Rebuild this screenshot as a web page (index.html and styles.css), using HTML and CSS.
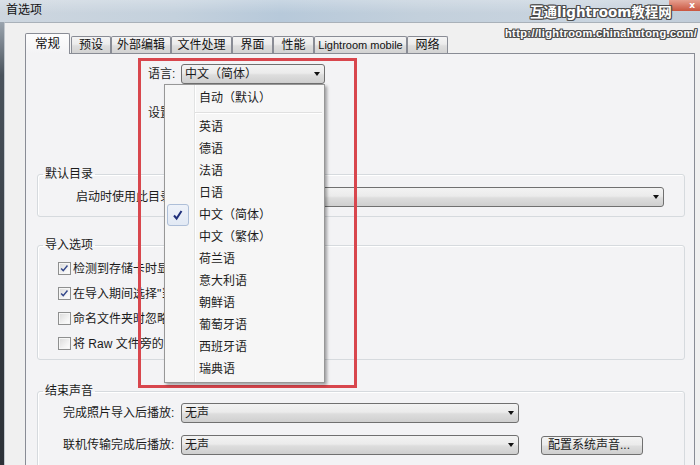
FILE: index.html
```html
<!DOCTYPE html>
<html lang="zh-CN">
<head>
<meta charset="utf-8">
<title>首选项</title>
<link rel="stylesheet" href="styles.css">
</head>
<body>
<div class="win">
  <div class="titlebar">
    <span class="title">首选项</span>
    <div class="close">x</div>
  </div>
  <div class="frame">
    <div class="edge"></div>
    <div class="client">
      <div class="tabs">
        <div class="tab sel w45">常规</div>
        <div class="tab w40 gap">预设</div>
        <div class="tab w60">外部编辑</div>
        <div class="tab w61">文件处理</div>
        <div class="tab w41">界面</div>
        <div class="tab w41">性能</div>
        <div class="tab w93 latin">Lightroom mobile</div>
        <div class="tab w41">网络</div>
      </div>
      <div class="panel">
        <div class="lang">
          <span class="lbl">语言:</span>
          <div class="combo w-lang"><span>中文（简体）</span><span class="arrow"></span></div>
        </div>
        <div class="settings">
          <span class="lbl">设置:</span>
        </div>

        <fieldset class="group g1">
          <legend>默认目录</legend>
          <div class="inner row-dir">
            <span class="lbl-dir">启动时使用此目录:</span>
            <div class="combo w-dir"><span></span><span class="arrow"></span></div>
          </div>
        </fieldset>

        <fieldset class="group g2">
          <legend>导入选项</legend>
          <div class="inner">
            <div class="crow"><span class="cb on"><svg viewBox="0 0 13 13" width="11" height="11"><path d="M2.5 6.5 L5 9 L10 3" fill="none" stroke="#34488a" stroke-width="1.7"/></svg></span><span>检测到存储卡时显示导入对话框</span></div>
            <div class="crow"><span class="cb on"><svg viewBox="0 0 13 13" width="11" height="11"><path d="M2.5 6.5 L5 9 L10 3" fill="none" stroke="#34488a" stroke-width="1.7"/></svg></span><span>在导入期间选择"当前/上一次导入"文件夹</span></div>
            <div class="crow"><span class="cb"></span><span>命名文件夹时忽略相机生成的文件夹名</span></div>
            <div class="crow"><span class="cb"></span><span>将 Raw 文件旁的 JPEG 文件视为单独的照片</span></div>
          </div>
        </fieldset>

        <fieldset class="group g3">
          <legend>结束声音</legend>
          <div class="inner">
            <div class="srow">
              <span class="lbl-snd">完成照片导入后播放:</span>
              <div class="combo w-snd"><span>无声</span><span class="arrow"></span></div>
            </div>
            <div class="srow">
              <span class="lbl-snd">联机传输完成后播放:</span>
              <div class="combo w-snd"><span>无声</span><span class="arrow"></span></div>
              <div class="btn">配置系统声音...</div>
            </div>
          </div>
        </fieldset>
      </div>
    </div>
  </div>

  <div class="hl"></div>

  <div class="menu">
    <div class="item"><span class="slot"></span><span>自动（默认）</span></div>
    <div class="sep"></div>
    <div class="item"><span class="slot"></span><span>英语</span></div>
    <div class="item"><span class="slot"></span><span>德语</span></div>
    <div class="item"><span class="slot"></span><span>法语</span></div>
    <div class="item"><span class="slot"></span><span>日语</span></div>
    <div class="item"><span class="slot"><span class="mark"><svg viewBox="0 0 20 20" width="20" height="20"><path d="M6 10.5 L8.6 13.5 L13.5 6" fill="none" stroke="#1f2f7a" stroke-width="2"/></svg></span></span><span>中文（简体）</span></div>
    <div class="item"><span class="slot"></span><span>中文（繁体）</span></div>
    <div class="item"><span class="slot"></span><span>荷兰语</span></div>
    <div class="item"><span class="slot"></span><span>意大利语</span></div>
    <div class="item"><span class="slot"></span><span>朝鲜语</span></div>
    <div class="item"><span class="slot"></span><span>葡萄牙语</span></div>
    <div class="item"><span class="slot"></span><span>西班牙语</span></div>
    <div class="item"><span class="slot"></span><span>瑞典语</span></div>
  </div>

  <div class="wm1">互通lightroom教程网</div>
  <div class="wm2">http://lightroom.chinahutong.com/</div>
</div>
</body>
</html>
```

FILE: styles.css
```css
* { box-sizing: border-box; }
html, body { margin: 0; padding: 0; }
body {
  width: 700px;
  height: 465px;
  overflow: hidden;
  background: #f0f0f0;
  font-family: "Liberation Sans", "Noto Sans CJK SC", sans-serif;
  font-size: 12px;
  line-height: 16px;
  color: #1b1b1b;
}
.win {
  position: relative;
  width: 700px;
  height: 465px;
  display: flex;
  flex-direction: column;
  overflow: hidden;
}

/* title bar */
.titlebar {
  height: 22px;
  flex: none;
  position: relative;
  padding: 2px 0 0 6px;
  background:
    linear-gradient(180deg, rgba(255,255,255,0.25), rgba(255,255,255,0) 60%),
    linear-gradient(90deg, #cdd6df 0%, #c4d1dd 25%, #b7c9da 40%, #c3d0dc 60%, #c9d4df 85%, #c0ccd8 100%);
  color: #111;
}
.title { font-size: 12px; line-height: 16px; }
.close {
  position: absolute;
  right: 0;
  top: 0;
  width: 31px;
  height: 11px;
  border-radius: 0 0 0 4px;
  background: linear-gradient(180deg, #e6a090, #c9553f);
  color: #fff;
  font: bold 9px/10px "DejaVu Sans", sans-serif;
  text-align: right;
  padding-right: 5px;
}

/* frame */
.frame { flex: 1; display: flex; min-height: 0; }
.edge {
  width: 4px;
  flex: none;
  background: linear-gradient(180deg, #9aa4ae 0%, #4a535c 12%, #353b42 60%, #2c3137 100%);
}
.client {
  flex: 1;
  min-width: 0;
  display: flex;
  flex-direction: column;
  overflow: hidden;
  padding: 10px 0 0 20px;
  background: #f0f0f0;
  border-top: 1px solid #a9b1b9;
  border-left: 1px solid #c2c8ce;
}

/* tabs */
.tabs {
  display: flex;
  align-items: flex-end;
  height: 20px;
  flex: none;
  position: relative;
  z-index: 1;
}
.tab {
  height: 17px;
  border: 1px solid #898c95;
  border-bottom: none;
  border-radius: 2px 2px 0 0;
  background: linear-gradient(180deg, #f4f4f4 0%, #ebebeb 45%, #dedede 55%, #d2d2d2 100%);
  text-align: center;
  line-height: 16px;
  white-space: nowrap;
  color: #111;
}
.tab.sel {
  height: 21px;
  margin-bottom: -1px;
  padding-top: 2px;
  background: linear-gradient(180deg, #fdfdfd, #f3f3f5);
  font-size: 12.5px;
}
.tab.latin { font-size: 11px; }
.gap { margin-left: 1px; }
.w40 { width: 40px; }
.w41 { width: 41px; }
.w45 { width: 45px; }
.w60 { width: 60px; }
.w61 { width: 61px; }
.w93 { width: 93px; }

/* panel */
.panel {
  width: 670px;
  height: 430px;
  flex: none;
  border: 1px solid #898c95;
  background: #f3f3f5;
  display: flex;
  flex-direction: column;
}

.lang {
  margin: 10px 0 0 122px;
  height: 20px;
  display: flex;
  align-items: center;
}
.lbl { width: 33px; flex: none; }

.combo {
  height: 20px;
  border: 1px solid #707070;
  border-radius: 3px;
  background: linear-gradient(180deg, #f3f3f3 0%, #ebebeb 45%, #dddddd 55%, #cfcfcf 100%);
  display: flex;
  align-items: center;
  justify-content: space-between;
  padding: 0 4px 0 3px;
  line-height: 16px;
  flex: none;
}
.arrow {
  width: 0;
  height: 0;
  border-left: 3.5px solid transparent;
  border-right: 3.5px solid transparent;
  border-top: 4px solid #111;
}
.w-lang { width: 144px; }
.w-dir { width: 483px; }
.w-snd { width: 338px; }

.settings {
  margin: 19px 0 0 122px;
  height: 20px;
  display: flex;
  align-items: center;
}

.cb {
  width: 13px;
  height: 13px;
  flex: none;
  margin-right: 2px;
  border: 1px solid #8e8f8f;
  background: linear-gradient(135deg, #d9d9d9 0%, #f2f2f2 60%, #ffffff 100%);
  box-shadow: inset 0 0 0 1px #f6f6f6;
  display: flex;
  align-items: center;
  justify-content: center;
}
.cb svg { display: block; }

/* group boxes */
.group {
  margin: 0 9px 0 11px;
  padding: 0;
  min-width: 0;
  border: 1px solid #d6dade;
  border-radius: 3px;
  box-shadow: inset 1px 1px 0 #ffffff;
}
.group legend {
  margin-left: 5px;
  padding: 0 2px;
  line-height: 16px;
}
.g1 { margin-top: 43px; }
.g2 { margin-top: 20px; }
.g3 { margin-top: 23px; }

.row-dir {
  display: flex;
  align-items: center;
  padding: 5px 0 9px 38px;
}
.lbl-dir { width: 105px; flex: none; white-space: nowrap; }

.g2 .inner { padding: 3px 0 3px 20px; }
.crow {
  height: 25px;
  display: flex;
  align-items: center;
  white-space: nowrap;
}

.g3 .inner { padding: 4px 0 20px 25px; }
.srow {
  height: 20px;
  display: flex;
  align-items: center;
}
.srow + .srow { margin-top: 12px; }
.lbl-snd { width: 118px; flex: none; }
.btn {
  margin-left: 22px;
  width: 102px;
  height: 19px;
  border: 1px solid #707070;
  border-radius: 3px;
  background: linear-gradient(180deg, #f3f3f3 0%, #ebebeb 45%, #dddddd 55%, #cfcfcf 100%);
  padding-left: 6px;
  line-height: 17px;
}

/* red highlight */
.hl {
  position: absolute;
  left: 138px;
  top: 58px;
  width: 219px;
  height: 330px;
  border: 3px solid #d8464d;
}

/* dropdown menu */
.menu {
  position: absolute;
  left: 164px;
  top: 84px;
  width: 161px;
  height: 299px;
  padding: 2px;
  border: 1px solid #979797;
  background-color: #f6f6f6;
  background-image: linear-gradient(90deg, transparent 29px, #e2e3e3 29px, #e2e3e3 30px, #ffffff 30px, #ffffff 31px, transparent 31px);
  box-shadow: 2px 2px 3px rgba(0,0,0,0.35);
}
.item {
  height: 22px;
  display: flex;
  align-items: center;
  color: #1b1b1b;
}
.slot {
  width: 32px;
  height: 22px;
  flex: none;
  display: flex;
  align-items: center;
}
.mark {
  width: 22px;
  height: 22px;
  border: 1px solid #aebfd8;
  border-radius: 3px;
  background: linear-gradient(180deg, #eef2f9, #e2e9f4);
  display: flex;
  align-items: center;
  justify-content: center;
}
.mark svg { display: block; }
.sep {
  height: 7px;
  margin-left: 28px;
  background: linear-gradient(180deg, transparent 3px, #e0e0e0 3px, #e0e0e0 4px, #ffffff 4px, #ffffff 5px, transparent 5px);
}

/* watermark */
.wm1, .wm2 {
  position: absolute;
  color: #ffffff;
  white-space: nowrap;
  text-shadow:
    1px 0 0 #4d4d4d, -1px 0 0 #4d4d4d, 0 1px 0 #4d4d4d, 0 -1px 0 #4d4d4d,
    1px 1px 0 #4d4d4d, -1px -1px 0 #4d4d4d, 1px -1px 0 #4d4d4d, -1px 1px 0 #4d4d4d;
}
.wm1 {
  left: 530px;
  top: 4px;
  font: bold 13.5px/17px "DejaVu Sans", "Noto Sans CJK SC", sans-serif;
}
.wm2 {
  left: 505px;
  top: 27px;
  font: bold 11px/13px "Liberation Sans", sans-serif;
  letter-spacing: 0.4px;
}
```
